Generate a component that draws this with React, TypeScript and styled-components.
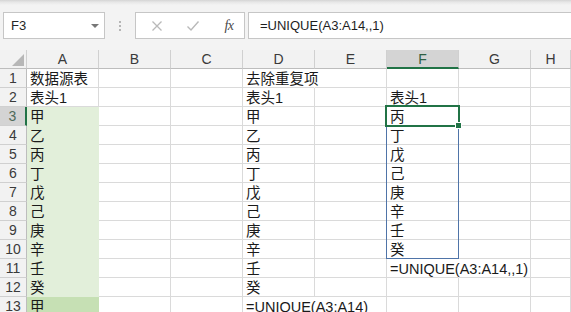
import React from 'react';
import styled, { createGlobalStyle } from 'styled-components';

const Global = createGlobalStyle`
  html, body { margin: 0; padding: 0; background: #fff; overflow: hidden; }
  body { font-family: "Liberation Sans", "Noto Sans CJK SC", sans-serif; }
  #root { width: 571px; height: 312px; }
`;

const Window = styled.div`
  width: 571px;
  height: 312px;
  overflow: hidden;
  display: flex;
  flex-direction: column;
  background: #f3f3f3;
`;

const FormulaBar = styled.div`
  height: 50px;
  flex: none;
  box-sizing: border-box;
  display: flex;
  align-items: flex-start;
  padding: 12px 0 0 3px;
  background: linear-gradient(#d4d4d4 0px, #e6e6e6 2px, #f3f3f3 5px, #f3f3f3 100%);
`;

const NameBox = styled.div`
  width: 102px;
  height: 27px;
  box-sizing: border-box;
  background: #fff;
  border: 1px solid #c6c6c6;
  display: flex;
  align-items: center;
  justify-content: space-between;
  padding: 0 5px 0 7px;
  font-size: 13px;
  color: #262626;
`;

const Caret = styled.span`
  width: 0;
  height: 0;
  border-left: 4px solid transparent;
  border-right: 4px solid transparent;
  border-top: 4px solid #777;
  margin-top: 1px;
`;

const Dots = styled.div`
  width: 30px;
  height: 27px;
  display: flex;
  flex-direction: column;
  align-items: center;
  justify-content: center;
  gap: 2px;
`;

const Dot = styled.span`
  width: 2px;
  height: 2px;
  background: #b5b5b5;
`;

const ButtonsBox = styled.div`
  width: 110px;
  height: 27px;
  box-sizing: border-box;
  background: #fff;
  border: 1px solid #c6c6c6;
  display: flex;
  align-items: center;
  padding-left: 10px;
  gap: 14px;
`;

const IconSlot = styled.span<{ $w?: number }>`
  width: ${(p) => p.$w ?? 22}px;
  height: 20px;
  display: flex;
  align-items: center;
  justify-content: center;
`;

const Fx = styled.span`
  font-family: "Liberation Serif", serif;
  font-style: italic;
  font-size: 14px;
  color: #4a4a4a;
  letter-spacing: -0.5px;
`;

const FormulaInput = styled.div`
  flex: 1;
  height: 27px;
  margin-left: 3px;
  box-sizing: border-box;
  background: #fff;
  border: 1px solid #c6c6c6;
  border-right: none;
  display: flex;
  align-items: center;
  padding-left: 11px;
  font-size: 13px;
  color: #1e1e1e;
`;

const SheetWrap = styled.div`
  position: relative;
  flex: 1;
  background: #fff;
  overflow: hidden;
`;

const Grid = styled.div`
  display: grid;
  grid-template-columns: 27px repeat(7, 72px) 1fr;
  grid-template-rows: 19px;
  grid-auto-rows: 19px;
`;

const Corner = styled.div`
  box-sizing: border-box;
  background: #f2f2f2;
  border-right: 1px solid #d0d0d0;
  border-bottom: 1px solid #bdbdbd;
  display: flex;
  align-items: flex-end;
  justify-content: flex-end;
  padding: 0 2px 2px 0;
`;

const ColHead = styled.div<{ $sel?: boolean }>`
  box-sizing: border-box;
  background: ${(p) => (p.$sel ? '#d4d4d4' : '#f2f2f2')};
  border-right: 1px solid #d0d0d0;
  border-bottom: ${(p) => (p.$sel ? '2px solid #217346' : '1px solid #bdbdbd')};
  display: flex;
  align-items: center;
  justify-content: center;
  font-size: 14px;
  color: ${(p) => (p.$sel ? '#2f5f43' : '#3a3a3a')};
  padding-top: ${(p) => (p.$sel ? '1px' : '0')};
`;

const RowHead = styled.div<{ $sel?: boolean }>`
  box-sizing: border-box;
  background: ${(p) => (p.$sel ? '#d4d4d4' : '#f2f2f2')};
  border-right: ${(p) => (p.$sel ? '2px solid #217346' : '1px solid #bdbdbd')};
  border-bottom: 1px solid #d0d0d0;
  display: flex;
  align-items: center;
  justify-content: center;
  font-size: 14px;
  line-height: 19px;
  color: ${(p) => (p.$sel ? '#4f6a5a' : '#3a3a3a')};
  padding-top: 1px;
`;

const Cell = styled.div<{ $fill?: string; $hideRight?: boolean }>`
  position: relative;
  box-sizing: border-box;
  background: ${(p) => p.$fill ?? '#fff'};
  border-right: 1px solid ${(p) => (p.$hideRight ? '#fff' : p.$fill ?? '#dadada')};
  border-bottom: 1px solid ${(p) => p.$fill ?? '#dadada'};
  font-size: 14.5px;
  line-height: 18px;
  color: #1a1a1a;
  white-space: nowrap;
  overflow: visible;
  padding: 1px 0 0 3px;
`;

const Overflow = styled.span`
  position: relative;
  z-index: 2;
  background: #fff;
  padding-right: 2px;
`;

const Selection = styled.div`
  position: absolute;
  left: 385px;
  top: 55px;
  width: 75px;
  height: 22px;
  box-sizing: border-box;
  border: 2px solid #217346;
  z-index: 4;
  pointer-events: none;
`;

const FillHandle = styled.div`
  position: absolute;
  left: 455px;
  top: 72px;
  width: 7px;
  height: 7px;
  box-sizing: border-box;
  background: #217346;
  border: 1px solid #fff;
  z-index: 5;
`;

const SpillRange = styled.div`
  position: absolute;
  left: 386px;
  top: 76px;
  width: 73px;
  height: 133px;
  box-sizing: border-box;
  border: 1px solid #4f74a8;
  border-top: none;
  z-index: 3;
  pointer-events: none;
`;

const COLS = ['A', 'B', 'C', 'D', 'E', 'F', 'G', 'H'];
const STEMS = ['甲', '乙', '丙', '丁', '戊', '己', '庚', '辛', '壬', '癸'];
const UNIQUE_OUT = ['丙', '丁', '戊', '己', '庚', '辛', '壬', '癸'];

type RowData = { A?: string; D?: string; F?: string };

const rows: RowData[] = [];
rows.push({ A: '数据源表', D: '去除重复项' });
rows.push({ A: '表头1', D: '表头1', F: '表头1' });
for (let i = 0; i < 10; i++) {
  rows.push({ A: STEMS[i], D: STEMS[i], F: UNIQUE_OUT[i] });
}
rows[10].F = '=UNIQUE(A3:A14,,1)';
rows.push({ A: '甲', D: '=UNIQUE(A3:A14)' });

const overflowCells = new Set(['D1', 'F11', 'D13']);

function cellFill(col: string, r: number): string | undefined {
  if (col !== 'A') return undefined;
  if (r >= 3 && r <= 12) return '#e2efda';
  if (r === 13) return '#c6e0b4';
  return undefined;
}

export default function App() {
  return (
    <Window>
      <Global />
      <FormulaBar>
        <NameBox>
          <span>F3</span>
          <Caret />
        </NameBox>
        <Dots>
          <Dot />
          <Dot />
          <Dot />
        </Dots>
        <ButtonsBox>
          <IconSlot>
            <svg width="12" height="12" viewBox="0 0 12 12">
              <path d="M1.5 1.5 L10.5 10.5 M10.5 1.5 L1.5 10.5" stroke="#b9b9b9" strokeWidth="1.3" fill="none" />
            </svg>
          </IconSlot>
          <IconSlot>
            <svg width="14" height="12" viewBox="0 0 14 12">
              <path d="M1.5 6.5 L5 10 L12.5 1.5" stroke="#b9b9b9" strokeWidth="1.4" fill="none" />
            </svg>
          </IconSlot>
          <IconSlot>
            <Fx>fx</Fx>
          </IconSlot>
        </ButtonsBox>
        <FormulaInput>=UNIQUE(A3:A14,,1)</FormulaInput>
      </FormulaBar>
      <SheetWrap>
        <Grid>
          <Corner>
            <svg width="12" height="12" viewBox="0 0 12 12">
              <path d="M12 0 L12 12 L0 12 Z" fill="#b7b7b7" />
            </svg>
          </Corner>
          {COLS.map((c) => (
            <ColHead key={c} $sel={c === 'F'}>
              {c}
            </ColHead>
          ))}
          {rows.map((row, i) => {
            const r = i + 1;
            return (
              <React.Fragment key={r}>
                <RowHead $sel={r === 3}>{r}</RowHead>
                {COLS.map((c) => {
                  const v = (row as Record<string, string | undefined>)[c];
                  const id = `${c}${r}`;
                  const ov = overflowCells.has(id);
                  return (
                    <Cell key={id} $fill={cellFill(c, r)} $hideRight={ov}>
                      {v ? ov ? <Overflow>{v}</Overflow> : v : null}
                    </Cell>
                  );
                })}
              </React.Fragment>
            );
          })}
        </Grid>
        <SpillRange />
        <Selection />
        <FillHandle />
      </SheetWrap>
    </Window>
  );
}
